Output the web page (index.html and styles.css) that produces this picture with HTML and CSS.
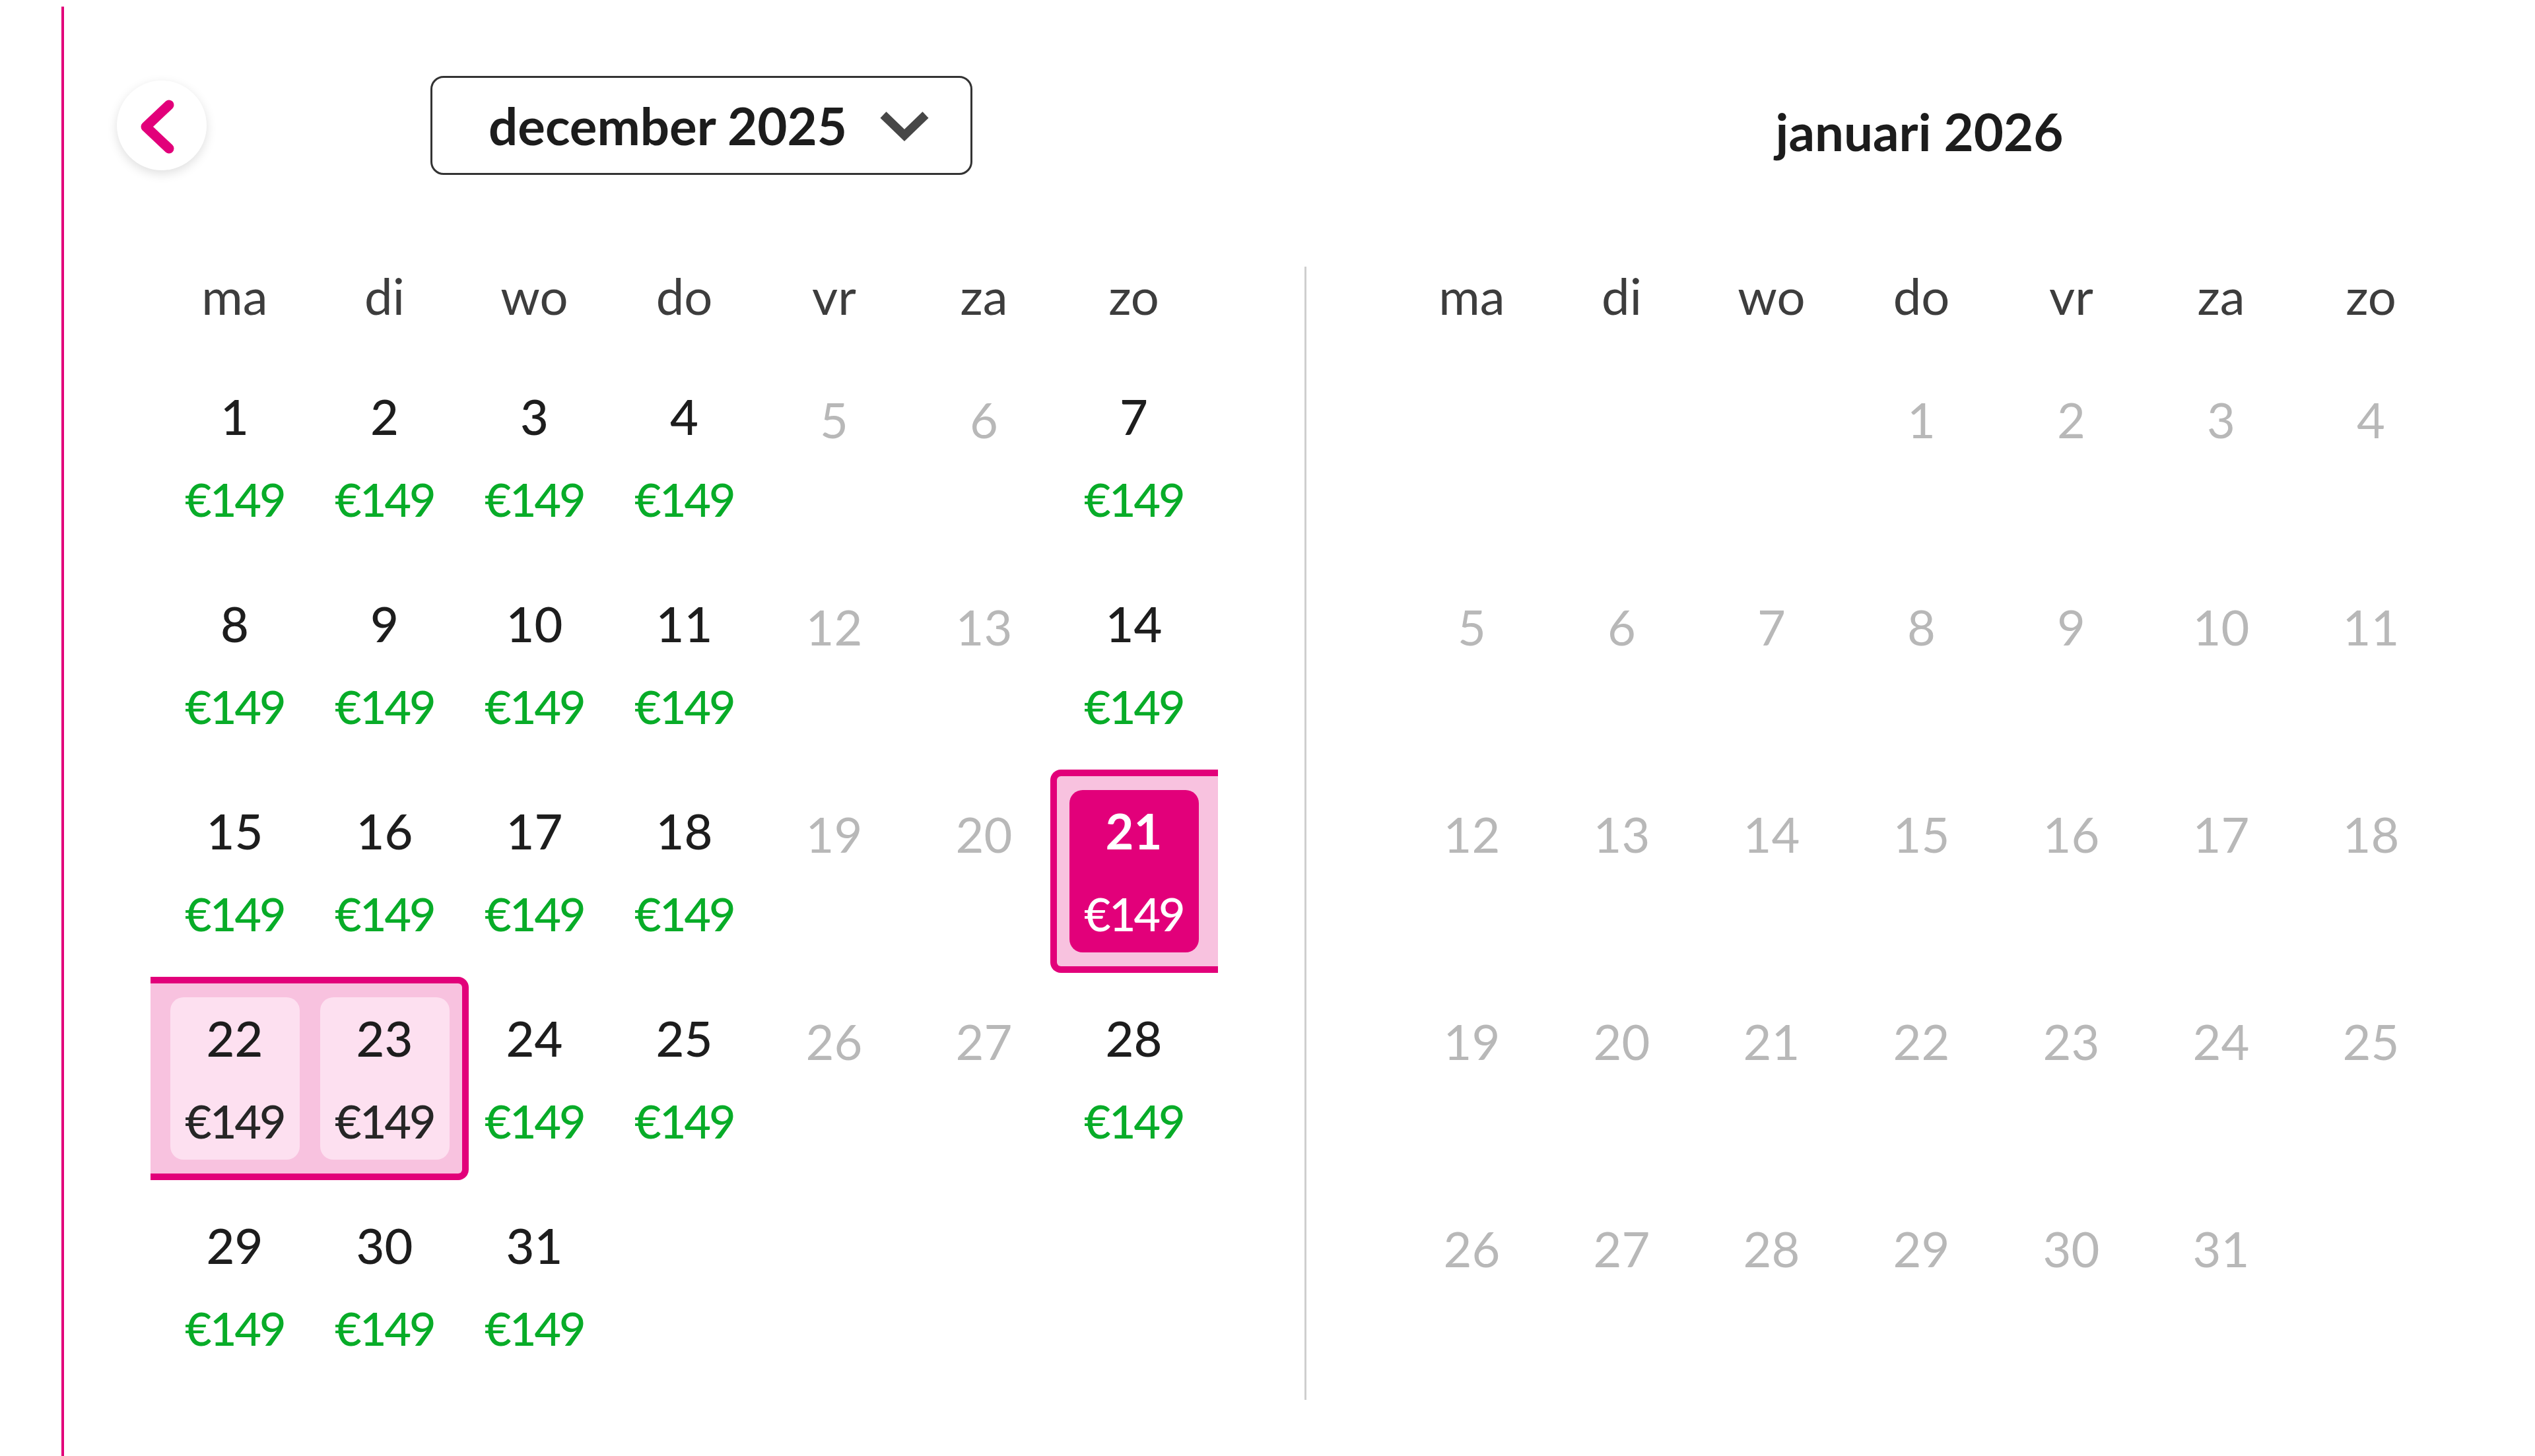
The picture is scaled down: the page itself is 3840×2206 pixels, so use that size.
FILE: index.html
```html
<!DOCTYPE html>
<html lang="nl">
<head>
<meta charset="utf-8">
<title>Kalender</title>
<link rel="stylesheet" href="styles.css">
</head>
<body>
<div class="frame">
  <div class="head-left">
    <button class="back" type="button" aria-label="Vorige maand">
      <svg width="136" height="136" viewBox="0 0 136 136"><path d="M79 37 L44 70 L79 103" fill="none" stroke="#e2007a" stroke-width="15" stroke-linecap="round" stroke-linejoin="round"/></svg>
    </button>
    <div class="month-select">
      <span>december 2025</span>
      <svg width="76" height="50" viewBox="0 0 76 50"><path d="M6 9 L38 40 L70 9" fill="none" stroke="#474747" stroke-width="13"/></svg>
    </div>
  </div>
  <div class="head-right">
    <div class="title">januari 2026</div>
  </div>

  <div class="body-left">
    <div class="weekdays"><div>ma</div><div>di</div><div>wo</div><div>do</div><div>vr</div><div>za</div><div>zo</div></div>
    <div class="clip">
      <div class="days">
        <div class="day"><div class="box"><span class="num">1</span><span class="price">€149</span></div></div>
        <div class="day"><div class="box"><span class="num">2</span><span class="price">€149</span></div></div>
        <div class="day"><div class="box"><span class="num">3</span><span class="price">€149</span></div></div>
        <div class="day"><div class="box"><span class="num">4</span><span class="price">€149</span></div></div>
        <div class="day off"><div class="box"><span class="num">5</span></div></div>
        <div class="day off"><div class="box"><span class="num">6</span></div></div>
        <div class="day"><div class="box"><span class="num">7</span><span class="price">€149</span></div></div>

        <div class="day"><div class="box"><span class="num">8</span><span class="price">€149</span></div></div>
        <div class="day"><div class="box"><span class="num">9</span><span class="price">€149</span></div></div>
        <div class="day"><div class="box"><span class="num">10</span><span class="price">€149</span></div></div>
        <div class="day"><div class="box"><span class="num">11</span><span class="price">€149</span></div></div>
        <div class="day off"><div class="box"><span class="num">12</span></div></div>
        <div class="day off"><div class="box"><span class="num">13</span></div></div>
        <div class="day"><div class="box"><span class="num">14</span><span class="price">€149</span></div></div>

        <div class="day"><div class="box"><span class="num">15</span><span class="price">€149</span></div></div>
        <div class="day"><div class="box"><span class="num">16</span><span class="price">€149</span></div></div>
        <div class="day"><div class="box"><span class="num">17</span><span class="price">€149</span></div></div>
        <div class="day"><div class="box"><span class="num">18</span><span class="price">€149</span></div></div>
        <div class="day off"><div class="box"><span class="num">19</span></div></div>
        <div class="day off"><div class="box"><span class="num">20</span></div></div>
        <div class="day band start sel"><div class="box"><span class="num">21</span><span class="price">€149</span></div></div>

        <div class="day band rng"><div class="box"><span class="num">22</span><span class="price">€149</span></div></div>
        <div class="day band end rng"><div class="box"><span class="num">23</span><span class="price">€149</span></div></div>
        <div class="day"><div class="box"><span class="num">24</span><span class="price">€149</span></div></div>
        <div class="day"><div class="box"><span class="num">25</span><span class="price">€149</span></div></div>
        <div class="day off"><div class="box"><span class="num">26</span></div></div>
        <div class="day off"><div class="box"><span class="num">27</span></div></div>
        <div class="day"><div class="box"><span class="num">28</span><span class="price">€149</span></div></div>

        <div class="day"><div class="box"><span class="num">29</span><span class="price">€149</span></div></div>
        <div class="day"><div class="box"><span class="num">30</span><span class="price">€149</span></div></div>
        <div class="day"><div class="box"><span class="num">31</span><span class="price">€149</span></div></div>
      </div>
    </div>
  </div>

  <div class="body-right">
    <div class="weekdays"><div>ma</div><div>di</div><div>wo</div><div>do</div><div>vr</div><div>za</div><div>zo</div></div>
    <div class="clip">
      <div class="days">
        <div class="day empty"></div>
        <div class="day empty"></div>
        <div class="day empty"></div>
        <div class="day off"><div class="box"><span class="num">1</span></div></div>
        <div class="day off"><div class="box"><span class="num">2</span></div></div>
        <div class="day off"><div class="box"><span class="num">3</span></div></div>
        <div class="day off"><div class="box"><span class="num">4</span></div></div>
        <div class="day off"><div class="box"><span class="num">5</span></div></div>
        <div class="day off"><div class="box"><span class="num">6</span></div></div>
        <div class="day off"><div class="box"><span class="num">7</span></div></div>
        <div class="day off"><div class="box"><span class="num">8</span></div></div>
        <div class="day off"><div class="box"><span class="num">9</span></div></div>
        <div class="day off"><div class="box"><span class="num">10</span></div></div>
        <div class="day off"><div class="box"><span class="num">11</span></div></div>
        <div class="day off"><div class="box"><span class="num">12</span></div></div>
        <div class="day off"><div class="box"><span class="num">13</span></div></div>
        <div class="day off"><div class="box"><span class="num">14</span></div></div>
        <div class="day off"><div class="box"><span class="num">15</span></div></div>
        <div class="day off"><div class="box"><span class="num">16</span></div></div>
        <div class="day off"><div class="box"><span class="num">17</span></div></div>
        <div class="day off"><div class="box"><span class="num">18</span></div></div>
        <div class="day off"><div class="box"><span class="num">19</span></div></div>
        <div class="day off"><div class="box"><span class="num">20</span></div></div>
        <div class="day off"><div class="box"><span class="num">21</span></div></div>
        <div class="day off"><div class="box"><span class="num">22</span></div></div>
        <div class="day off"><div class="box"><span class="num">23</span></div></div>
        <div class="day off"><div class="box"><span class="num">24</span></div></div>
        <div class="day off"><div class="box"><span class="num">25</span></div></div>
        <div class="day off"><div class="box"><span class="num">26</span></div></div>
        <div class="day off"><div class="box"><span class="num">27</span></div></div>
        <div class="day off"><div class="box"><span class="num">28</span></div></div>
        <div class="day off"><div class="box"><span class="num">29</span></div></div>
        <div class="day off"><div class="box"><span class="num">30</span></div></div>
        <div class="day off"><div class="box"><span class="num">31</span></div></div>
      </div>
    </div>
  </div>
</div>
</body>
</html>
```
FILE: styles.css
```css
html, body {
  margin: 0;
  padding: 0;
  background: #ffffff;
}
body {
  font-family: Lato, "Open Sans", "DejaVu Sans", sans-serif;
  color: #1d1d1d;
}
.frame {
  margin: 10px 0 0 93px;
  border-left: 4px solid #e2007a;
  min-height: 2196px;
  display: grid;
  grid-template-columns: 1879px 1fr;
  grid-template-rows: 255px auto;
  align-items: start;
}
.head-left {
  box-sizing: border-box;
  height: 255px;
  padding-top: 105px;
  display: flex;
  align-items: center;
}
.back {
  margin: 0 0 0 80px;
  padding: 0;
  border: none;
  width: 136px;
  height: 136px;
  border-radius: 50%;
  background: #ffffff;
  box-shadow: 0 5px 16px rgba(0, 0, 0, 0.13);
  display: flex;
  align-items: center;
  justify-content: center;
}
.back svg { display: block; }
.month-select {
  margin-left: 339px;
  box-sizing: border-box;
  width: 821px;
  height: 150px;
  border: 3px solid #333333;
  border-radius: 20px;
  padding: 0 62px 0 85px;
  display: flex;
  align-items: center;
  font-size: 78px;
  font-weight: 700;
  color: #1c1c1c;
}
.month-select svg {
  margin-left: auto;
  display: block;
}
.head-right {
  padding: 150px 0 0 137px;
}
.title {
  width: 1589px;
  text-align: center;
  font-size: 78px;
  line-height: 78px;
  font-weight: 700;
  color: #1c1c1c;
}
.body-left {
  margin-top: 139px;
  padding: 0 0 19px 131px;
}
.body-right {
  margin-top: 139px;
  border-left: 3px solid #cfcfcf;
  padding: 0 0 19px 123px;
}
.weekdays {
  display: grid;
  grid-template-columns: repeat(7, 227px);
  margin-left: 14px;
}
.weekdays div {
  text-align: center;
  font-size: 76px;
  line-height: 88px;
  color: #3d3d3d;
}
.clip {
  overflow: hidden;
  width: 1589px;
  padding: 0 14px;
  margin-top: 46px;
}
.days {
  display: grid;
  grid-template-columns: repeat(7, 227px);
  grid-auto-rows: 308px;
  row-gap: 6px;
}
.day {
  position: relative;
}
.box {
  position: relative;
  z-index: 1;
  box-sizing: border-box;
  width: 196px;
  height: 246px;
  margin: 31px auto 0;
  padding-top: 25px;
  border-radius: 20px;
  text-align: center;
}
.num {
  display: block;
  height: 74px;
  font-size: 74px;
  line-height: 74px;
  font-weight: 500;
  color: #1d1d1d;
}
.price {
  display: block;
  margin-top: 53px;
  font-size: 70px;
  line-height: 70px;
  font-weight: 500;
  letter-spacing: -3px;
  color: #08ac28;
}
.off .box { padding-top: 30px; }
.off .num { color: #b8b8b8; font-weight: 400; }

.band::before {
  content: "";
  position: absolute;
  z-index: 0;
  top: 0;
  bottom: 0;
  left: -14px;
  right: -14px;
  background: #f8c2df;
  border-top: 10px solid #e2007a;
  border-bottom: 10px solid #e2007a;
}
.band.start::before {
  left: -13px;
  border-left: 10px solid #e2007a;
  border-radius: 16px 0 0 16px;
}
.band.end::before {
  border-right: 10px solid #e2007a;
  border-radius: 0 16px 16px 0;
}
.sel .box { background: #e2007a; }
.sel .num { color: #ffffff; font-weight: 700; }
.sel .price { color: #ffffff; }
.rng .box { background: #fde0f0; }
.rng .price { color: #262626; }
```
